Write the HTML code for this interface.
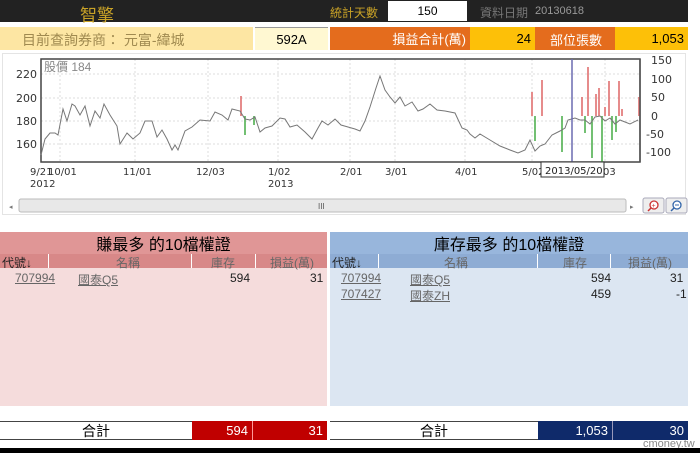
<!DOCTYPE html>
<html><head><meta charset="utf-8"><style>
*{margin:0;padding:0;box-sizing:border-box}
body{width:700px;height:453px;background:#fff;font-family:"Liberation Sans","Noto Sans CJK TC",sans-serif;position:relative;overflow:hidden;font-size:12px}
.a{position:absolute}
.c{display:flex;align-items:center;justify-content:center}
.r{display:flex;align-items:center;justify-content:flex-end;padding-right:4px}
</style></head><body>
<div class="a" style="left:0;top:0;width:688px;height:22px;background:#222"></div>
<div class="a" style="left:80px;top:1px;color:#c9a227;font-size:17px">智擎</div>
<div class="a" style="left:330px;top:4px;color:#c9a227;font-size:12px">統計天數</div>
<div class="a c" style="left:388px;top:1px;width:79px;height:20px;background:#fff;font-size:12px">150</div>
<div class="a" style="left:480px;top:4px;color:#777;font-size:12px">資料日期</div>
<div class="a" style="left:535px;top:5px;color:#999;font-size:11px">20130618</div>

<div class="a" style="left:0;top:27px;width:253px;height:23px;background:#fde6a3;color:#a08a50;font-size:14px;padding:3px 0 0 22px">目前查詢券商： 元富-緯城</div>
<div class="a c" style="left:255px;top:27px;width:73px;height:23px;background:#fff8d2;font-size:13px;border-top:1px solid #999">592A</div>
<div class="a r" style="left:330px;top:27px;width:140px;height:23px;background:#e46c1d;color:#fff;font-size:13px">損益合計(萬)</div>
<div class="a r" style="left:470px;top:27px;width:65px;height:23px;background:#fdc008;font-size:13px">24</div>
<div class="a" style="left:535px;top:27px;width:80px;height:23px;background:#e46c1d;color:#fff;font-size:13px;padding:3px 0 0 15px">部位張數</div>
<div class="a r" style="left:615px;top:27px;width:73px;height:23px;background:#fdc008;font-size:13px">1,053</div>

<div class="a" style="left:2px;top:53px;width:684px;height:162px;border:1px solid #e4e4e4"></div>
<svg class="a" style="left:0;top:0" width="700" height="220">
<g stroke="#ddd" stroke-dasharray="2,2" stroke-width="1">
<line x1="41" y1="74" x2="640" y2="74"/><line x1="41" y1="98" x2="640" y2="98"/><line x1="41" y1="121" x2="640" y2="121"/><line x1="41" y1="144" x2="640" y2="144"/>
<line x1="60" y1="59" x2="60" y2="162"/><line x1="135" y1="59" x2="135" y2="162"/><line x1="208" y1="59" x2="208" y2="162"/><line x1="278" y1="59" x2="278" y2="162"/><line x1="350" y1="59" x2="350" y2="162"/><line x1="395" y1="59" x2="395" y2="162"/><line x1="465" y1="59" x2="465" y2="162"/><line x1="532" y1="59" x2="532" y2="162"/><line x1="605" y1="59" x2="605" y2="162"/>
</g>
<rect x="41" y="59" width="599" height="103" fill="none" stroke="#444" stroke-width="1.5"/>
<g stroke-width="1.5">
<g stroke="#d66">
<line x1="241" y1="96" x2="241" y2="116"/><line x1="532" y1="92" x2="532" y2="116"/><line x1="542" y1="80" x2="542" y2="116"/><line x1="582" y1="97" x2="582" y2="116"/><line x1="588" y1="67" x2="588" y2="116"/><line x1="596" y1="94" x2="596" y2="116"/><line x1="599" y1="88" x2="599" y2="116"/><line x1="605" y1="107" x2="605" y2="116"/><line x1="609" y1="81" x2="609" y2="116"/><line x1="619" y1="81" x2="619" y2="116"/><line x1="622" y1="109" x2="622" y2="116"/><line x1="639" y1="97" x2="639" y2="116"/>
</g>
<g stroke="#4a4">
<line x1="245" y1="116" x2="245" y2="135"/><line x1="254" y1="116" x2="254" y2="125"/><line x1="535" y1="116" x2="535" y2="141"/><line x1="562" y1="116" x2="562" y2="152"/><line x1="585" y1="116" x2="585" y2="133"/><line x1="592" y1="116" x2="592" y2="158"/><line x1="602" y1="116" x2="602" y2="162"/><line x1="612" y1="116" x2="612" y2="140"/><line x1="616" y1="116" x2="616" y2="132"/>
</g></g>
<polyline fill="none" stroke="#777" stroke-width="1" points="41,155 45,139 50,133 55,133 58,135 63,109 67,121 72,104 75,106 80,115 85,106 90,126 95,111 100,118 104,104 110,115 117,126 120,144 127,133 133,139 140,133 145,121 152,121 157,137 162,130 167,139 172,150 175,145 178,150 185,131 192,127 200,120 210,121 215,112 222,115 228,120 232,109 240,111 245,119 250,120 255,117 260,132 265,128 272,126 280,118 285,119 290,127 297,125 305,132 312,139 318,128 322,121 328,125 335,119 341,125 348,127 355,129 360,131 365,121 370,107 376,88 380,76 385,90 390,97 395,103 400,97 405,106 412,102 418,111 423,109 430,104 437,110 445,111 455,113 462,128 467,130 470,134 475,138 480,134 490,140 500,146 510,150 518,153 525,150 530,140 535,151 540,146 545,144 552,135 560,131 565,128 568,120 575,118 580,120 585,120 590,124 595,117 600,116 605,121 610,118 615,124 620,120 625,122 630,124 638,120"/>
<line x1="572" y1="59" x2="572" y2="162" stroke="#6a6ab0" stroke-width="1.5"/>
<g font-family="DejaVu Sans,sans-serif" font-size="11" fill="#333">
<text x="16" y="78">220</text><text x="16" y="102">200</text><text x="16" y="125">180</text><text x="16" y="148">160</text>
<text x="651" y="64">150</text><text x="651" y="83">100</text><text x="651" y="101">50</text><text x="651" y="120">0</text><text x="646" y="138">-50</text><text x="646" y="156">-100</text>
<g font-size="10"><text x="30" y="175">9/21</text><text x="48" y="175">10/01</text><text x="123" y="175">11/01</text><text x="196" y="175">12/03</text><text x="268" y="175">1/02</text><text x="340" y="175">2/01</text><text x="385" y="175">3/01</text><text x="455" y="175">4/01</text><text x="522" y="175">5/02</text><text x="603" y="175">03</text>
<text x="30" y="187">2012</text><text x="268" y="187">2013</text></g>
<text x="44" y="71" fill="#888" font-family="Liberation Sans,Noto Sans CJK TC,sans-serif" font-size="12">股價 184</text>
</g>
<g stroke="#555" stroke-width="1.5"><line x1="640" y1="59" x2="640" y2="162"/></g>
<rect x="541" y="162" width="63" height="15" fill="#fff" stroke="#333"/>
<text x="545" y="174" font-family="DejaVu Sans,sans-serif" font-size="10" fill="#222">2013/05/20</text>
<rect x="19" y="199" width="607" height="13" rx="2" fill="#e8e8e8" stroke="#bbb"/>
<text x="318" y="209" font-size="8" fill="#555">III</text>
<text x="9" y="209" font-size="7" fill="#777">◂</text><text x="630" y="209" font-size="7" fill="#777">▸</text>
<rect x="643" y="198" width="21" height="15" rx="2" fill="#eee" stroke="#aab"/>
<rect x="666" y="198" width="21" height="15" rx="2" fill="#eee" stroke="#aab"/>
<circle cx="654" cy="205" r="4" fill="#fff" stroke="#c33" stroke-width="1.3"/><line x1="651" y1="208" x2="648" y2="211" stroke="#c33" stroke-width="1.5"/><text x="651.5" y="208" font-size="7" fill="#c33">+</text>
<circle cx="677" cy="205" r="4" fill="#fff" stroke="#36a" stroke-width="1.3"/><line x1="674" y1="208" x2="671" y2="211" stroke="#36a" stroke-width="1.5"/><line x1="675" y1="205" x2="679" y2="205" stroke="#36a"/>
</svg>

<div class="a" style="left:0;top:232px;width:327px;height:174px;background:#f5dcdc"></div>
<div class="a c" style="left:0;top:232px;width:327px;height:22px;background:#e09696;font-size:16px">賺最多 的10檔權證</div>
<div class="a" style="left:0;top:254px;width:327px;height:14px;background:#d88888"></div>
<div class="a" style="left:330px;top:232px;width:358px;height:174px;background:#dce6f2"></div>
<div class="a c" style="left:330px;top:232px;width:358px;height:22px;background:#98b6dc;font-size:16px">庫存最多 的10檔權證</div>
<div class="a" style="left:330px;top:254px;width:358px;height:14px;background:#8eacd4"></div>
<div style="font-size:12px;color:#444">
<div class="a" style="left:2px;top:254px;color:#222">代號↓</div>
<div class="a" style="left:48px;top:254px;width:1px;height:14px;background:#fff"></div>
<div class="a" style="left:116px;top:254px;color:#666">名稱</div>
<div class="a" style="left:191px;top:254px;width:1px;height:14px;background:#fff"></div>
<div class="a" style="left:211px;top:254px;color:#666">庫存</div>
<div class="a" style="left:255px;top:254px;width:1px;height:14px;background:#fff"></div>
<div class="a" style="left:270px;top:254px;color:#666">損益(萬)</div>
<div class="a" style="left:15px;top:271px;text-decoration:underline;color:#666">707994</div>
<div class="a" style="left:78px;top:271px;text-decoration:underline;color:#666">國泰Q5</div>
<div class="a" style="left:230px;top:271px;color:#222">594</div>
<div class="a" style="left:310px;top:271px;color:#222">31</div>

<div class="a" style="left:332px;top:254px;color:#222">代號↓</div>
<div class="a" style="left:378px;top:254px;width:1px;height:14px;background:#fff"></div>
<div class="a" style="left:444px;top:254px;color:#666">名稱</div>
<div class="a" style="left:537px;top:254px;width:1px;height:14px;background:#fff"></div>
<div class="a" style="left:563px;top:254px;color:#666">庫存</div>
<div class="a" style="left:610px;top:254px;width:1px;height:14px;background:#fff"></div>
<div class="a" style="left:628px;top:254px;color:#666">損益(萬)</div>
<div class="a" style="left:341px;top:271px;text-decoration:underline;color:#666">707994</div>
<div class="a" style="left:410px;top:271px;text-decoration:underline;color:#666">國泰Q5</div>
<div class="a" style="left:591px;top:271px;color:#222">594</div>
<div class="a" style="left:670px;top:271px;color:#222">31</div>
<div class="a" style="left:341px;top:287px;text-decoration:underline;color:#666">707427</div>
<div class="a" style="left:410px;top:287px;text-decoration:underline;color:#666">國泰ZH</div>
<div class="a" style="left:591px;top:287px;color:#222">459</div>
<div class="a" style="left:676px;top:287px;color:#222">-1</div>
</div>

<div class="a c" style="left:0;top:421px;width:192px;height:19px;border-top:1px solid #444;border-bottom:1px solid #444;font-size:14px">合計</div>
<div class="a r" style="left:192px;top:421px;width:61px;height:19px;background:#c00000;color:#fff;font-size:13px;border-right:1px solid #f99">594</div>
<div class="a r" style="left:253px;top:421px;width:74px;height:19px;background:#c00000;color:#fff;font-size:13px">31</div>
<div class="a c" style="left:330px;top:421px;width:208px;height:19px;border-top:1px solid #444;border-bottom:1px solid #444;font-size:14px">合計</div>
<div class="a r" style="left:538px;top:421px;width:75px;height:19px;background:#0f2a6a;color:#fff;font-size:13px;border-right:1px solid #99b">1,053</div>
<div class="a r" style="left:613px;top:421px;width:75px;height:19px;background:#0f2a6a;color:#fff;font-size:13px">30</div>
<div class="a" style="left:643px;top:438px;color:#888;font-size:11px">cmoney.tw</div>
<div class="a" style="left:0;top:448px;width:700px;height:5px;background:#000"></div>
</body></html>
